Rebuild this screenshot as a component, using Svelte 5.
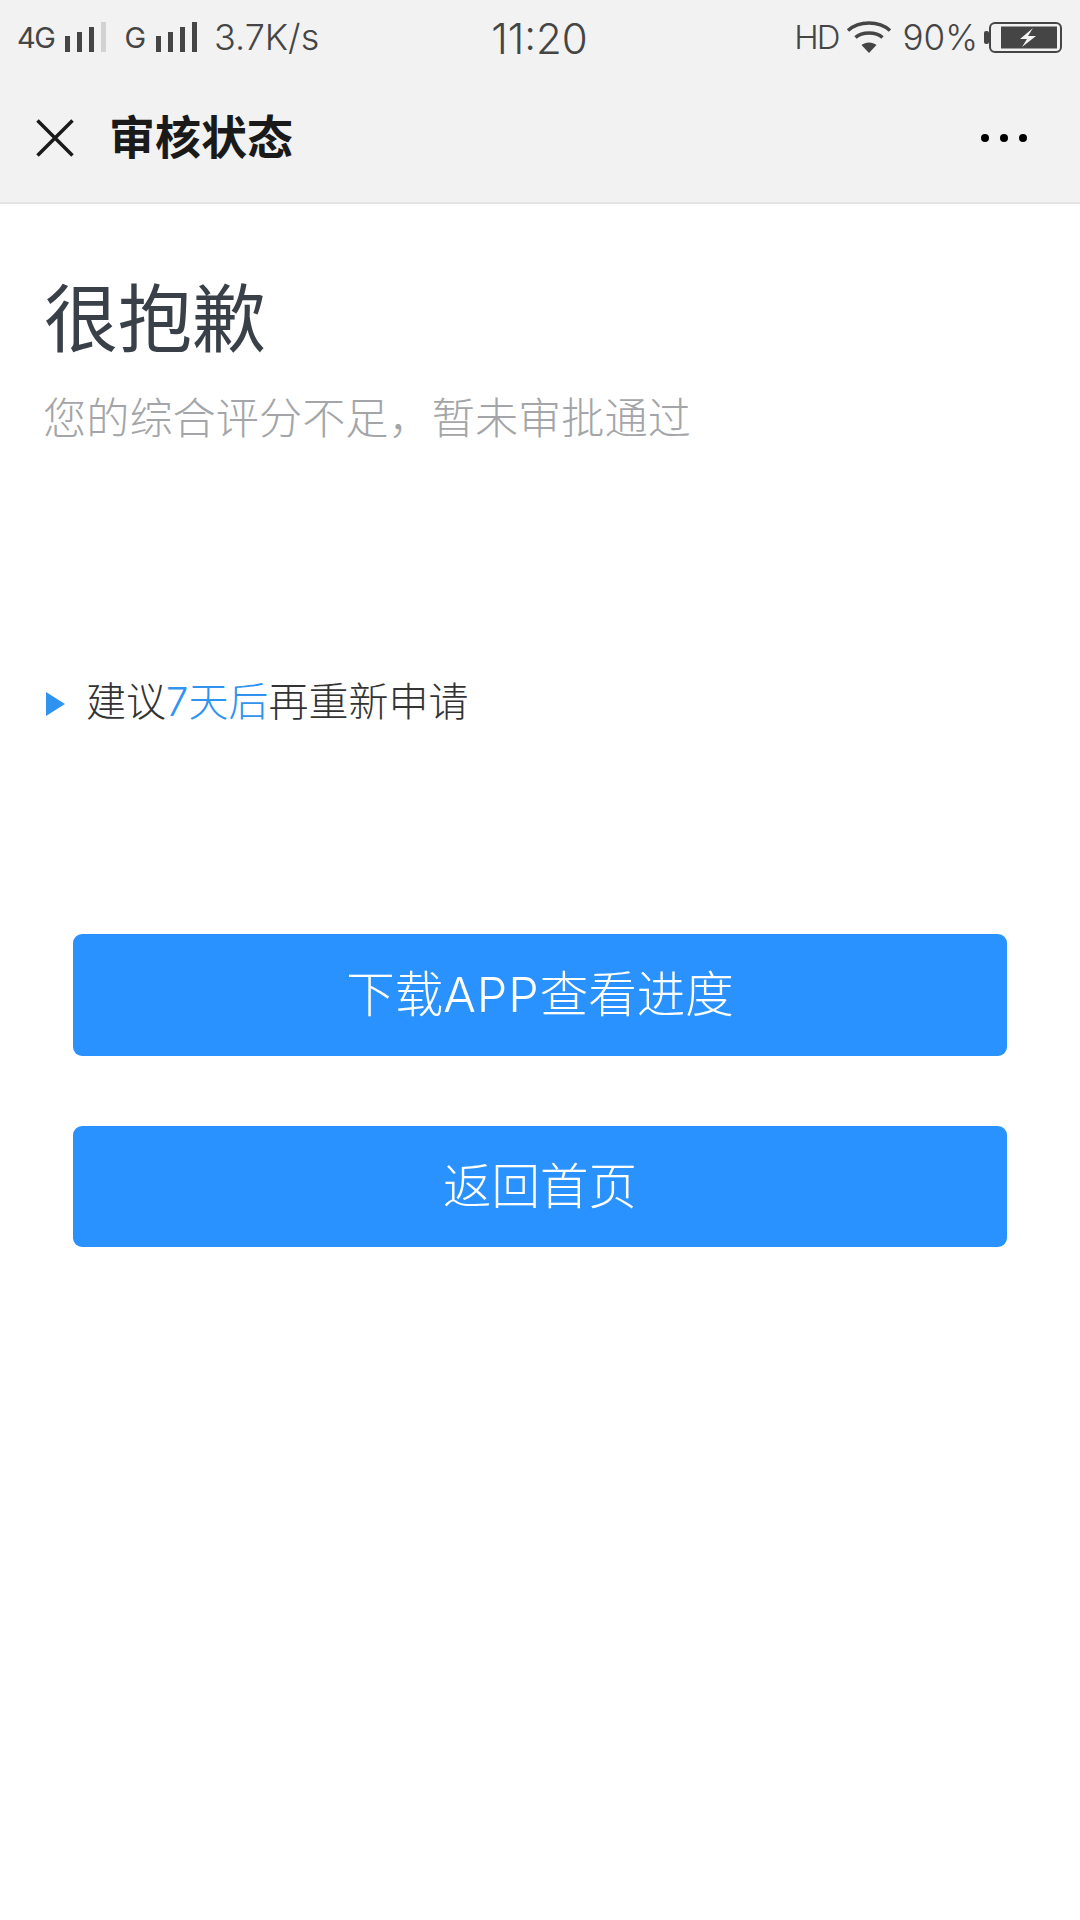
<script lang="ts">
	const signal = [
		{ x: 0, y: 14 },
		{ x: 12, y: 10 },
		{ x: 24, y: 5 }
	];
</script>

<div class="page">
	<header class="top">
		<div class="status">
			<div class="side left">
				<span class="net">4G</span>
				<svg class="bars" width="41" height="30" viewBox="0 0 41 30">
					{#each signal as b}
						<rect x={b.x} y={b.y} width="5" height={30 - b.y} fill="#454545" />
					{/each}
					<rect x="36" y="0" width="5" height="30" fill="#d2d2d2" />
				</svg>
				<span class="net g">G</span>
				<svg class="bars" width="41" height="30" viewBox="0 0 41 30">
					{#each signal as b}
						<rect x={b.x} y={b.y} width="5" height={30 - b.y} fill="#454545" />
					{/each}
					<rect x="36" y="0" width="5" height="30" fill="#454545" />
				</svg>
				<span class="speed">3.7K/s</span>
			</div>
			<span class="time">11:20</span>
			<div class="side right">
				<span class="hd">HD</span>
				<svg class="wifi" width="46" height="32" viewBox="0 0 46 32" fill="none" stroke="#454545" stroke-width="3.500">
					<path d="M2 9.500C13 -0.500 33 -0.500 44 9.500" />
					<path d="M9.500 16.500C16 10.500 30 10.500 36.500 16.500" />
					<path d="M23 32L15.500 24C19.500 20.500 26.500 20.500 30.500 24Z" fill="#454545" stroke="none" />
				</svg>
				<span class="pct">90%</span>
				<svg class="battery" width="78" height="31" viewBox="0 0 78 31">
					<rect x="0" y="9" width="5" height="13" rx="2" fill="#454545" />
					<rect x="6" y="1" width="71" height="29" rx="5" fill="none" stroke="#454545" stroke-width="2" />
					<rect x="17" y="4.500" width="56" height="22" fill="#454545" />
					<path d="M49 6L36 17H43L38 25L52 14H44Z" fill="#f4f4f4" />
				</svg>
			</div>
		</div>
		<nav class="nav">
			<svg class="close" width="38" height="38" viewBox="0 0 38 38" stroke="#1a1a1a" stroke-width="3.500">
				<path d="M1.500 1.500L36.500 36.500M36.500 1.500L1.500 36.500" />
			</svg>
			<span class="nav-title">审核状态</span>
			<div class="more">
				<i></i><i></i><i></i>
			</div>
		</nav>
	</header>

	<main class="content">
		<h1>很抱歉</h1>
		<p class="sub">您的综合评分不足，暂未审批通过</p>

		<p class="tip">
			<span class="arrow"></span>
			<span>建议<em>7天后</em>再重新申请</span>
		</p>

		<div class="actions">
			<button>下载<span class="latin">APP</span>查看进度</button>
			<button>返回首页</button>
		</div>
	</main>
</div>

<style>
	:global(body) {
		margin: 0;
		background: #fff;
	}

	.page {
		width: 1080px;
		height: 1920px;
		overflow: hidden;
		background: #fff;
		font-family: Inter, "Noto Sans CJK SC", sans-serif;
	}

	.top {
		background: #f2f2f2;
		border-bottom: 2px solid #e4e4e4;
	}

	.status {
		display: grid;
		grid-template-columns: 1fr auto 1fr;
		align-items: center;
		height: 74px;
		padding: 0 18px 2px 17px;
		color: #454545;
		font-weight: 300;
	}

	.side {
		display: flex;
		align-items: center;
	}

	.right {
		justify-content: flex-end;
	}

	.net {
		font-size: 29px;
		font-weight: 400;
		letter-spacing: -1.500px;
	}

	.net.g {
		margin-left: 18px;
		margin-right: 10px;
		letter-spacing: 0;
	}

	.bars {
		margin-left: 11px;
	}

	.net.g + .bars {
		margin-left: 0;
	}

	.speed {
		margin-left: 17px;
		font-size: 36px;
	}

	.time {
		margin-top: 2px;
		font-size: 42px;
	}

	.hd {
		font-size: 33px;
		letter-spacing: -2px;
	}

	.wifi {
		margin-left: 7px;
	}

	.pct {
		margin-left: 11px;
		font-size: 35px;
	}

	.battery {
		margin-left: 6px;
	}

	.nav {
		display: flex;
		align-items: center;
		height: 126px;
		padding: 0 36px;
	}

	.close {
		margin-top: -2px;
	}

	.nav-title {
		margin: -10px 0 0 35px;
		font-family: "Noto Sans CJK SC", sans-serif;
		font-size: 46px;
		font-weight: 700;
		color: #1a1a1a;
	}

	.more {
		display: flex;
		gap: 11px;
		margin: -2px 17px 0 auto;
	}

	.more i {
		width: 8px;
		height: 8px;
		border-radius: 50%;
		background: #000;
	}

	.content {
		padding: 0 44px;
	}

	h1 {
		margin: 70px 0 0;
		font-size: 74px;
		font-weight: 400;
		line-height: 90px;
		color: #394048;
	}

	.sub {
		margin: 29px 0 0 -1px;
		font-size: 43.200px;
		font-weight: 300;
		line-height: 50px;
		color: #a3a5a8;
	}

	.tip {
		display: flex;
		align-items: center;
		margin: 234px 0 0 2px;
		font-size: 40px;
		font-weight: 300;
		line-height: 50px;
		color: #333;
	}

	.arrow {
		width: 0;
		height: 0;
		margin: 4px 21px 0 0;
		border-left: 19px solid #2f93f0;
		border-top: 12px solid transparent;
		border-bottom: 12px solid transparent;
	}

	.tip em {
		font-style: normal;
		color: #2f93f0;
	}

	.actions {
		display: flex;
		flex-direction: column;
		gap: 70px;
		margin: 207px 29px 0;
	}

	button {
		height: 121.500px;
		padding: 0 0 7px;
		border: 0;
		border-radius: 9px;
		background: #2a92ff;
		color: #fff;
		font-family: Inter, "Noto Sans CJK SC", sans-serif;
		font-size: 48.500px;
		font-weight: 300;
	}

	.latin {
		letter-spacing: 1px;
	}
</style>
